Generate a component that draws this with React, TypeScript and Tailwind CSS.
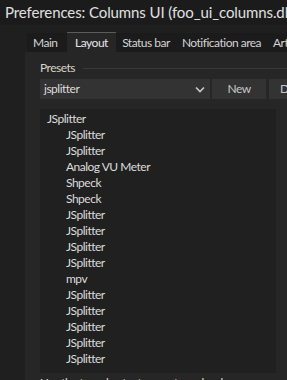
import React from "react";

const F = { fontFamily: 'Lato, "Noto Sans", "Liberation Sans", sans-serif' };

const items: [string, number][] = [
  ["JSplitter", 0],
  ["JSplitter", 1],
  ["JSplitter", 1],
  ["Analog VU Meter", 1],
  ["Shpeck", 1],
  ["Shpeck", 1],
  ["JSplitter", 1],
  ["JSplitter", 1],
  ["JSplitter", 1],
  ["JSplitter", 1],
  ["mpv", 1],
  ["JSplitter", 1],
  ["JSplitter", 1],
  ["JSplitter", 1],
  ["JSplitter", 1],
  ["JSplitter", 1],
];

export default function App() {
  return (
    <div className="w-[287px] h-[380px] overflow-hidden bg-[#1f1f1f] flex flex-col text-[#dcdcdc]" style={F}>
      <div className="h-[25px] shrink-0 bg-[#1b1b1b] flex items-center pl-[5px] whitespace-nowrap text-[15px] tracking-[-0.1px] text-[#e0e0e0]">
        Preferences: Columns UI (foo_ui_columns.dll)
      </div>
      <div className="flex-1 pl-[25px] pt-[7px] flex flex-col">
        <div className="flex items-end h-[20px] text-[12px] tracking-[-0.5px] whitespace-nowrap">
          <div className="shrink-0 ml-[2px] w-[40px] h-[19px] bg-[#1b1b1b] flex items-center pl-[6px] text-[#d4d4d4] overflow-hidden">Main</div>
          <div className="shrink-0 w-[49px] h-[20px] bg-[#262626] border-t border-[#5c5c5c] flex items-center justify-center text-[#e6e6e6] overflow-hidden">Layout</div>
          <div className="shrink-0 w-[60px] h-[19px] bg-[#1b1b1b] flex items-center justify-center text-[#d4d4d4] overflow-hidden">Status bar</div>
          <div className="shrink-0 w-[91px] h-[19px] bg-[#1b1b1b] flex items-center justify-center text-[#d4d4d4] overflow-hidden">Notification area</div>
          <div className="flex-1 min-w-0 h-[19px] bg-[#1b1b1b] flex items-center pl-[6px] text-[#d4d4d4] overflow-hidden">Artwork</div>
        </div>
        <div className="flex-1 bg-[#262626] pl-[15px] pt-[9px] text-[12px] tracking-[-0.5px]">
          <div className="flex items-center h-[14px]">
            <span className="text-[#d8d4c8]">Presets</span>
            <div className="flex-1 h-px bg-[#3a3a3a] ml-[8px]" />
          </div>
          <div className="flex mt-[4px] h-[20px] gap-[2px]">
            <div className="shrink-0 w-[170px] bg-[#333333] flex items-center pl-[4px] justify-between pr-[5px]">
              <span className="text-[#dcdcdc]">jsplitter</span>
              <svg width="10" height="7" viewBox="0 0 10 7">
                <path d="M1 1.5 L5 5.5 L9 1.5" stroke="#c8c8c8" strokeWidth="1.6" fill="none" />
              </svg>
            </div>
            <div className="shrink-0 w-[54px] bg-[#333333] flex items-center justify-center text-[#c8c8c8]">New</div>
            <div className="shrink-0 w-[54px] ml-px bg-[#333333] flex items-center justify-center text-[#c8c8c8] whitespace-nowrap overflow-hidden">Delete</div>
          </div>
          <div className="mt-[10px] w-[236px] h-[264px] bg-[#202020] pt-[2px]">
            {items.map(([t, l], i) => (
              <div key={i} className={`h-[16px] flex items-center ${l ? "pl-[26px]" : "pl-[7px]"} text-[#dcdcdc]`}>
                {t}
              </div>
            ))}
          </div>
          <div className="mt-[1px] text-[#d8d4c8] whitespace-nowrap">Use the tree shortcut menu to make changes</div>
        </div>
      </div>
    </div>
  );
}
